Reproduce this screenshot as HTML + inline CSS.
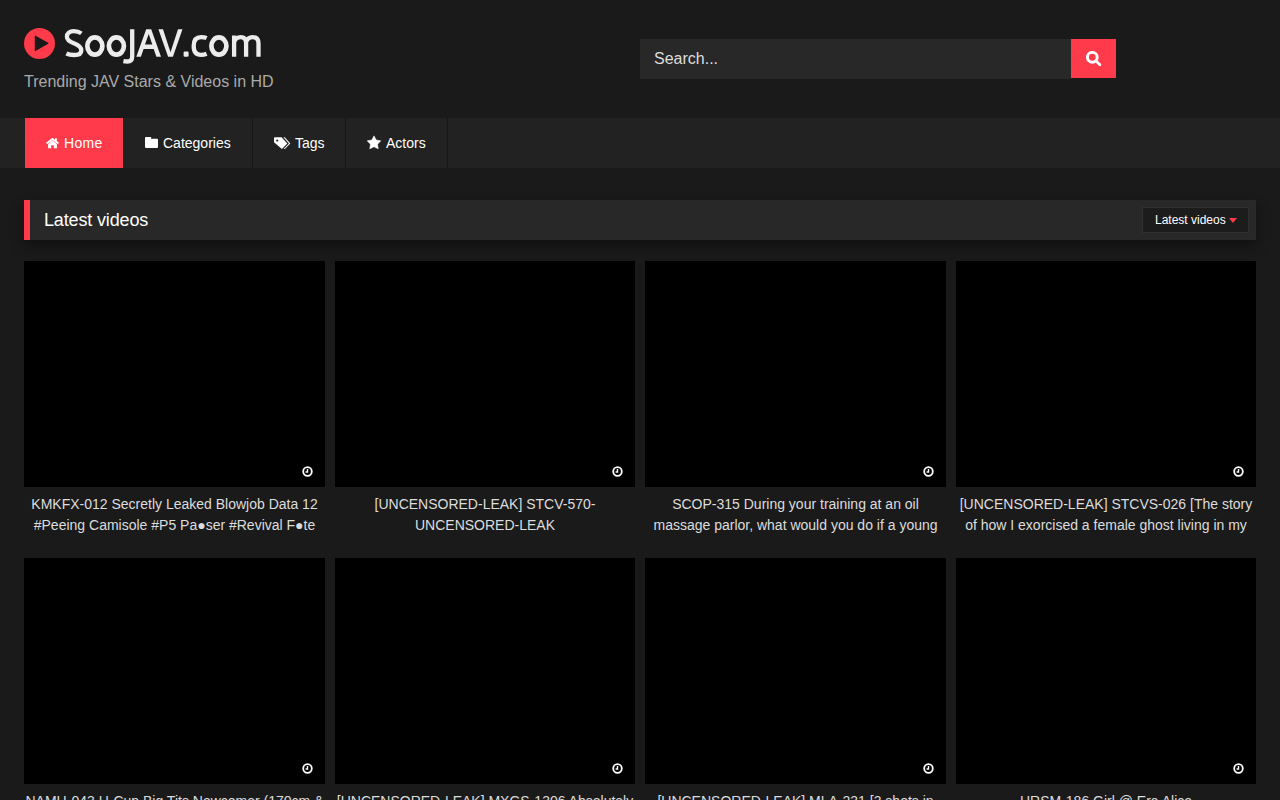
<!DOCTYPE html>
<html><head><meta charset="utf-8">
<style>
*{margin:0;padding:0;box-sizing:border-box}
html,body{width:1280px;height:800px;overflow:hidden;background:#1a1a1a;font-family:"Liberation Sans",sans-serif;color:#ddd}
.abs{position:absolute}
#logo-icon{left:24px;top:28px;width:31px;height:31px}
#logo-text{left:63px;top:20px;font-size:38px;line-height:46px;color:#eee;letter-spacing:-2px;white-space:nowrap}
#tagline{left:24px;top:73px;font-size:16px;line-height:18px;color:#aaa;white-space:nowrap}
#search{left:640px;top:39px;width:431px;height:40px;background:#282828}
#search span{position:absolute;left:14px;top:11px;font-size:16px;line-height:18px;color:#ddd}
#sbtn{left:1071px;top:39px;width:45px;height:39px;background:#ff3a4a}
#sbtn svg{position:absolute;left:15px;top:12px}
#nav{left:0;top:118px;width:1280px;height:50px;background:#222}
.ni{position:absolute;top:0;height:50px;font-size:14px;line-height:50px;color:#fff;white-space:nowrap}
.ni svg{position:absolute}
.sep{position:absolute;top:0;width:1px;height:50px;background:#171717}
#sechead{left:24px;top:200px;width:1232px;height:40px;background:#282828;border-left:6px solid #ff3a4a;box-shadow:0 6px 12px rgba(0,0,0,.4)}
#sechead h2{position:absolute;left:14px;top:9px;font-size:18px;line-height:22px;font-weight:normal;color:#fff;letter-spacing:-0.15px}
#dd{left:1142px;top:207px;width:107px;height:26px;background:#1c1c1c;border:1px solid #303030}
#dd span{position:absolute;left:12px;top:5px;font-size:12px;line-height:14px;color:#fff}
#dd i{position:absolute;left:86px;top:10px;width:0;height:0;border-left:4px solid transparent;border-right:4px solid transparent;border-top:5px solid #ff3a4a}
.th{position:absolute;background:#000;height:226px}
.th svg{position:absolute;right:12px;bottom:10px}
.tt{position:absolute;font-size:14px;line-height:21px;margin-top:1px;color:#ddd;text-align:center;height:42px;overflow:hidden}
</style></head><body>

<svg class="abs" id="logo-icon" viewBox="0 0 31 31"><circle cx="15.5" cy="15.5" r="15.5" fill="#ff3a4a"/><path d="M11.3 8.2 L23.9 15.3 L11.3 22.5 Z" fill="#1a1a1a" stroke="#1a1a1a" stroke-width="1.1" stroke-linejoin="round"/></svg>
<svg class="abs" style="left:0;top:0" width="280" height="70" viewBox="0 0 280 70">
<g fill="none" stroke="#ececec" stroke-width="4.3">
<path d="M81.4 33.4 C79.4 31.9 76.8 31.1 73.8 31.1 C69.6 31.1 66.9 33.4 66.9 36.8 C66.9 40.3 69.6 41.7 73.8 43.3 C78.6 45.1 81.3 46.9 81.3 50.4 C81.3 53.6 78.6 55 74.2 55 C71 55 68.3 54.5 66.4 53.5"/>
<ellipse cx="94.85" cy="46.05" rx="7.5" ry="8.6" stroke-width="4.7"/>
<ellipse cx="116.4" cy="46.05" rx="7.5" ry="8.6" stroke-width="4.7"/>
<path d="M132.2 29.2 L132.2 56.5 C132.2 60.3 130.2 61.5 127.2 61.5 C126.2 61.5 125 61.4 123.4 61.1"/>
<path d="M193.7 46 C193.7 51.7 196.2 54.9 201 54.9 C203 54.9 205 54.5 206.6 53.8 M206.6 38.1 C205 37.3 202.9 37.2 201 37.2 C196.2 37.2 193.7 40.4 193.7 46"/>
<ellipse cx="218.9" cy="46.05" rx="7.5" ry="8.6" stroke-width="4.7"/>
<path d="M234.1 35.6 L234.1 56.7 M234.1 42 C235.4 38.6 237.6 37.2 240.6 37.2 C244.6 37.2 246.1 39.5 246.1 43.5 L246.1 56.7 M246.1 42 C247.4 38.6 249.6 37.2 252.6 37.2 C256.6 37.2 258.5 39.5 258.5 43.5 L258.5 56.7"/>
</g>
<g fill="#ececec">
<path fill-rule="evenodd" d="M136.3 56.7 L146.2 29.2 L151.2 29.2 L161 56.7 L156.4 56.7 L153.7 48.9 L143.6 48.9 L140.9 56.7 Z M145 44.6 L152.3 44.6 L148.7 33.9 Z"/>
<path d="M158.4 29.2 L163 29.2 L170.5 52.3 L178 29.2 L182.5 29.2 L172.9 56.7 L168.1 56.7 Z"/>
<rect x="183.6" y="51.6" width="5" height="5.1" rx="1.2"/>
</g>
</svg>
<div class="abs" id="tagline">Trending JAV Stars &amp; Videos in HD</div>

<div class="abs" id="search"><span>Search...</span></div>
<div class="abs" id="sbtn"><svg width="17" height="17" viewBox="0 0 17 17"><circle cx="6.3" cy="6.3" r="4.9" fill="none" stroke="#fff" stroke-width="2.9"/><path d="M9.8 9.8 L13.9 13.7" stroke="#fff" stroke-width="2.7" stroke-linecap="round"/></svg></div>

<div class="abs" id="nav">
  <div class="ni" style="left:25px;width:98px;background:#ff3a4a">
    <svg style="left:21px;top:20px" width="13" height="11" viewBox="0 0 13 11"><polyline points="0.6,5.6 6.5,0.9 12.4,5.6" fill="none" stroke="#fff" stroke-width="1.9"/><rect x="9" y="0.2" width="1.8" height="3.4" fill="#fff"/><path d="M2.1 6.1 L6.5 2.6 L10.9 6.1 L10.9 10.2 L7.8 10.2 L7.8 7.3 L5.2 7.3 L5.2 10.2 L2.1 10.2 Z" fill="#fff"/></svg>
    <span style="position:absolute;left:39px;letter-spacing:0.3px">Home</span>
  </div>
  <div class="sep" style="left:123px"></div>
  <div class="ni" style="left:124px;width:128px">
    <svg style="left:21px;top:19px" width="13" height="11" viewBox="0 0 13 11"><path d="M0 1 Q0 0 1 0 L6.1 0 L6.1 1.7 L12 1.7 Q13 1.7 13 2.7 L13 10 Q13 11 12 11 L1 11 Q0 11 0 10 Z" fill="#fff"/></svg>
    <span style="position:absolute;left:39px">Categories</span>
  </div>
  <div class="sep" style="left:252px"></div>
  <div class="ni" style="left:253px;width:92px">
    <svg style="left:21px;top:19px" width="17" height="13" viewBox="0 0 17 13"><path fill-rule="evenodd" d="M0 1.1 Q0 0.3 0.8 0.3 L7.6 0.3 L13.3 6.4 L7.9 12 L0 5.2 Z M3.2 2.4 A1.05 1.05 0 1 0 3.21 2.4 Z" fill="#fff"/><path d="M9.4 0.3 L10.8 0.3 L16.3 6.4 L10.9 12 L9.6 12 L14.9 6.4 Z" fill="#fff"/></svg>
    <span style="position:absolute;left:42px">Tags</span>
  </div>
  <div class="sep" style="left:345px"></div>
  <div class="ni" style="left:346px;width:101px">
    <svg style="left:21px;top:17px" width="14" height="15" viewBox="0 0 14 15"><path d="M7.00 0.85 L9.20 5.02 L13.85 5.83 L10.57 9.21 L11.23 13.87 L7.00 11.80 L2.77 13.87 L3.43 9.21 L0.15 5.83 L4.80 5.02 Z" fill="#fff" stroke="#fff" stroke-width="0.5" stroke-linejoin="round"/></svg>
    <span style="position:absolute;left:40px">Actors</span>
  </div>
  <div class="sep" style="left:447px"></div>
</div>

<div class="abs" id="sechead"><h2>Latest videos</h2></div>
<div class="abs" id="dd"><span>Latest videos</span><i></i></div>

<!-- row 1 -->
<div class="th" style="left:24px;top:261px;width:301px"><svg width="11" height="11" viewBox="0 0 11 11"><circle cx="5.5" cy="5.5" r="4.3" fill="none" stroke="#fff" stroke-width="1.8"/><path d="M5.5 3 L5.5 6 L3.6 6" fill="none" stroke="#fff" stroke-width="1.4"/></svg></div>
<div class="th" style="left:335px;top:261px;width:300px"><svg width="11" height="11" viewBox="0 0 11 11"><circle cx="5.5" cy="5.5" r="4.3" fill="none" stroke="#fff" stroke-width="1.8"/><path d="M5.5 3 L5.5 6 L3.6 6" fill="none" stroke="#fff" stroke-width="1.4"/></svg></div>
<div class="th" style="left:645px;top:261px;width:301px"><svg width="11" height="11" viewBox="0 0 11 11"><circle cx="5.5" cy="5.5" r="4.3" fill="none" stroke="#fff" stroke-width="1.8"/><path d="M5.5 3 L5.5 6 L3.6 6" fill="none" stroke="#fff" stroke-width="1.4"/></svg></div>
<div class="th" style="left:956px;top:261px;width:300px"><svg width="11" height="11" viewBox="0 0 11 11"><circle cx="5.5" cy="5.5" r="4.3" fill="none" stroke="#fff" stroke-width="1.8"/><path d="M5.5 3 L5.5 6 L3.6 6" fill="none" stroke="#fff" stroke-width="1.4"/></svg></div>

<div class="tt" style="left:24px;top:493px;width:301px">KMKFX-012 Secretly Leaked Blowjob Data 12 #Peeing Camisole #P5 Pa●ser #Revival F●te</div>
<div class="tt" style="left:335px;top:493px;width:300px">[UNCENSORED-LEAK] STCV-570-UNCENSORED-LEAK</div>
<div class="tt" style="left:645px;top:493px;width:301px">SCOP-315 During your training at an oil massage parlor, what would you do if a young</div>
<div class="tt" style="left:956px;top:493px;width:300px">[UNCENSORED-LEAK] STCVS-026 [The story of how I exorcised a female ghost living in my</div>

<!-- row 2 -->
<div class="th" style="left:24px;top:558px;width:301px"><svg width="11" height="11" viewBox="0 0 11 11"><circle cx="5.5" cy="5.5" r="4.3" fill="none" stroke="#fff" stroke-width="1.8"/><path d="M5.5 3 L5.5 6 L3.6 6" fill="none" stroke="#fff" stroke-width="1.4"/></svg></div>
<div class="th" style="left:335px;top:558px;width:300px"><svg width="11" height="11" viewBox="0 0 11 11"><circle cx="5.5" cy="5.5" r="4.3" fill="none" stroke="#fff" stroke-width="1.8"/><path d="M5.5 3 L5.5 6 L3.6 6" fill="none" stroke="#fff" stroke-width="1.4"/></svg></div>
<div class="th" style="left:645px;top:558px;width:301px"><svg width="11" height="11" viewBox="0 0 11 11"><circle cx="5.5" cy="5.5" r="4.3" fill="none" stroke="#fff" stroke-width="1.8"/><path d="M5.5 3 L5.5 6 L3.6 6" fill="none" stroke="#fff" stroke-width="1.4"/></svg></div>
<div class="th" style="left:956px;top:558px;width:300px"><svg width="11" height="11" viewBox="0 0 11 11"><circle cx="5.5" cy="5.5" r="4.3" fill="none" stroke="#fff" stroke-width="1.8"/><path d="M5.5 3 L5.5 6 L3.6 6" fill="none" stroke="#fff" stroke-width="1.4"/></svg></div>

<div class="tt" style="left:24px;top:790px;width:301px">NAMH-043 H-Cup Big Tits Newcomer (170cm &amp; Busty) Debut</div>
<div class="tt" style="left:335px;top:790px;width:300px">[UNCENSORED-LEAK] MXGS-1306 Absolutely Beautiful Girl</div>
<div class="tt" style="left:645px;top:790px;width:301px">[UNCENSORED-LEAK] MLA-231 [3 shots in consecutive creampie]</div>
<div class="tt" style="left:956px;top:790px;width:300px">HRSM-186 Girl @ Era Alice</div>

</body></html>
